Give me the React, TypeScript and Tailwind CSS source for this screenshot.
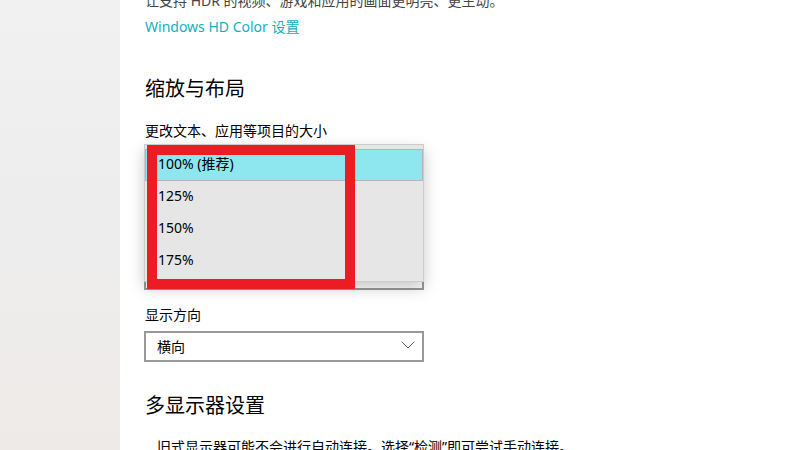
import { ChevronDown } from "lucide-react";

const sizes = ["100% (推荐)", "125%", "150%", "175%"];

const ScaleDropdown = () => {
  return (
    <div className="relative h-[146px] w-[280px] flex flex-col justify-end">
      {/* closed combobox under the open list */}
      <div className="h-[32px] w-[280px] shrink-0 border-2 border-[#999999] bg-white" />

      {/* open list */}
      <div className="absolute left-0 top-0 w-[280px] h-[138px] bg-[#e6e6e6] border border-[#cccccc] py-[4px] shadow-[0_6px_14px_rgba(0,0,0,0.22)]">
        {sizes.map((s, i) => (
          <div
            key={s}
            className={
              i === 0
                ? "h-[32px] flex items-center pl-[12px] pb-[3px] bg-[#8ee7ee] border border-[#b5b5b5] text-[14px] text-black"
                : "h-[32px] flex items-center pl-[13px] pb-[3px] text-[14px] text-black"
            }
          >
            {s}
          </div>
        ))}
      </div>

      {/* red highlight annotation */}
      <div className="absolute left-[3px] top-[1px] w-[208px] h-[144px] border-[10px] border-[#ed1c24]" />
    </div>
  );
};

export default function App() {
  return (
    <div className="flex w-[800px] h-[450px] overflow-hidden bg-white font-['Noto_Sans','Noto_Sans_CJK_SC',sans-serif]">
      <div className="w-[120px] h-full bg-linear-to-b from-[#f1f1f1] via-[#ededed] to-[#eeeae8]" />
      <div className="flex-1 flex flex-col pl-[24px] text-black [&>*]:shrink-0">
        <div className="mt-[-9px] h-[20px] leading-[20px] text-[14px] text-[#444444] whitespace-nowrap pl-[1px]">
          让支持 HDR 的视频、游戏和应用的画面更明亮、更生动。
        </div>
        <div className="mt-[6px] h-[20px] leading-[20px] text-[14px] text-[#12afc0] pl-[1px]">
          Windows HD Color 设置
        </div>
        <div className="mt-[38px] h-[28px] leading-[28px] text-[20px] pl-[1px]">缩放与布局</div>
        <div className="mt-[18px] h-[20px] leading-[20px] text-[14px] pl-[1px]">
          更改文本、应用等项目的大小
        </div>
        <div className="mt-[3px]">
          <ScaleDropdown />
        </div>
        <div className="mt-[15px] h-[20px] leading-[20px] text-[14px] pl-[1px]">显示方向</div>
        <div className="mt-[6px] h-[31px] w-[280px] border-2 border-[#999999] flex items-center justify-between pl-[11px] pr-[2px]">
          <span className="text-[14px] pb-[1px]">横向</span>
          <ChevronDown size={24} strokeWidth={0.8} className="text-[#333333] mb-[3px]" />
        </div>
        <div className="mt-[30px] h-[28px] leading-[28px] text-[20px] pl-[1px]">多显示器设置</div>
        <div className="mt-[17px] h-[20px] leading-[20px] text-[14px] pl-[13px] whitespace-nowrap">
          旧式显示器可能不会进行自动连接。选择“检测”即可尝试手动连接。
        </div>
      </div>
    </div>
  );
}
